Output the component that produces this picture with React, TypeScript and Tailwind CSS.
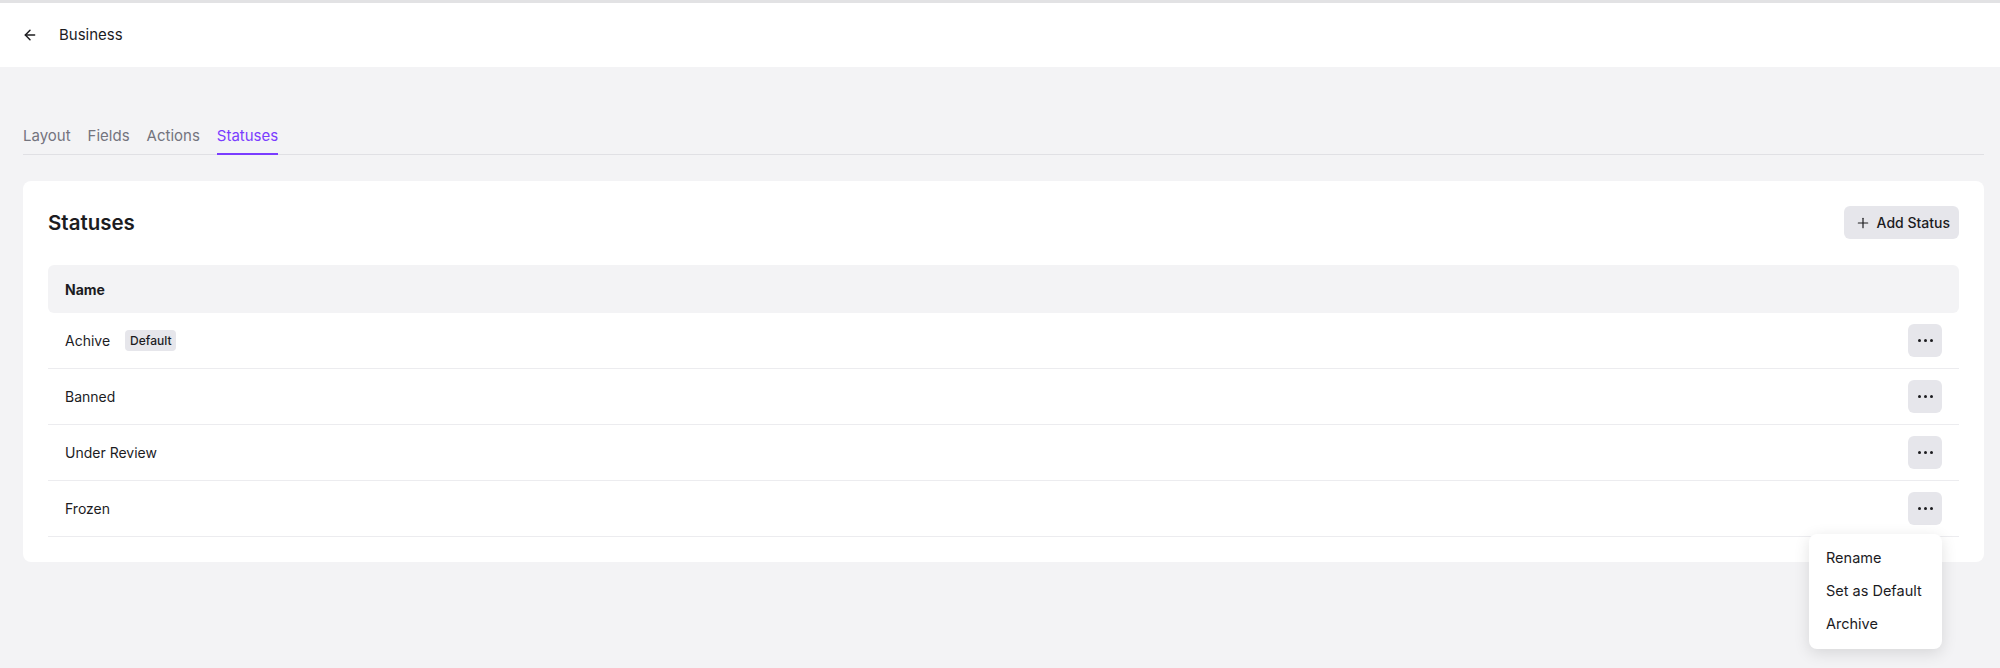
import { ArrowLeft, Plus } from "lucide-react";

const tabs = ["Layout", "Fields", "Actions", "Statuses"];

const statuses = [
  { id: 1, name: "Achive", isDefault: true },
  { id: 2, name: "Banned", isDefault: false },
  { id: 3, name: "Under Review", isDefault: false },
  { id: 4, name: "Frozen", isDefault: false, menuOpen: true },
];

const menuItems = ["Rename", "Set as Default", "Archive"];

function DotsButton() {
  return (
    <button className="flex h-[33px] w-[34px] items-center justify-center gap-[3px] rounded-md bg-[#e6e6eb]">
      <span className="h-[3px] w-[3px] rounded-full bg-[#1c1c1f]" />
      <span className="h-[3px] w-[3px] rounded-full bg-[#1c1c1f]" />
      <span className="h-[3px] w-[3px] rounded-full bg-[#1c1c1f]" />
    </button>
  );
}

export default function App() {
  return (
    <div className="min-h-screen bg-[#f3f3f5] font-['Inter',sans-serif] text-[#1c1c1f]">
      <header className="flex h-[67px] items-center gap-[21px] border-t-[3px] border-[#e2e2e4] bg-white px-[22px]">
        <ArrowLeft size={16} strokeWidth={2.2} />
        <span className="text-[15px] leading-5">Business</span>
      </header>

      <main className="pl-[23px] pr-[16px] pt-[59px]">
        <nav className="flex gap-[17px] border-b border-[#e0e0e4]">
          {tabs.map((tab) => (
            <button
              key={tab}
              className={`-mb-px pb-[7px] text-[15px] leading-5 ${
                tab === "Statuses"
                  ? "border-b-2 border-[#7a3cff] text-[#7a3cff]"
                  : "border-b-2 border-transparent text-[#74747e]"
              }`}
            >
              {tab}
            </button>
          ))}
        </nav>

        <section className="mt-[26px] rounded-lg bg-white px-[25px] pb-[25px] pt-[25px]">
          <div className="flex h-[33px] items-center justify-between">
            <h2 className="text-[20.5px] font-semibold leading-7">Statuses</h2>
            <button className="flex h-[33px] items-center gap-[6px] rounded-md bg-[#e6e6eb] pl-[11px] pr-[9px] text-[14px] font-medium">
              <Plus size={16} strokeWidth={1.8} />
              Add Status
            </button>
          </div>

          <div className="mt-[26px]">
            <div className="flex h-[48px] items-center rounded-md bg-[#f3f3f5] px-[17px] text-[14px] font-bold">
              Name
            </div>
            {statuses.map((s) => (
              <div
                key={s.id}
                className="flex h-[56px] items-center justify-between border-b border-[#ececef] pl-[17px] pr-[17px] text-[14px]"
              >
                <div className="flex items-center gap-[15px]">
                  <span>{s.name}</span>
                  {s.isDefault && (
                    <span className="rounded-[4px] bg-[#e6e6eb] px-[5px] py-[2px] text-[12px] font-medium leading-[17px]">
                      Default
                    </span>
                  )}
                </div>
                <div className="relative">
                  <DotsButton />
                  {s.menuOpen && (
                    <div className="absolute right-0 top-full z-10 mt-[9px] w-[133px] rounded-lg bg-white pb-[9px] pt-[7px] shadow-[0_4px_16px_rgba(0,0,0,0.12)]">
                      {menuItems.map((item) => (
                        <div key={item} className="flex h-[33px] items-center px-[17px] text-[14.5px]">
                          {item}
                        </div>
                      ))}
                    </div>
                  )}
                </div>
              </div>
            ))}
          </div>
        </section>
      </main>
    </div>
  );
}
